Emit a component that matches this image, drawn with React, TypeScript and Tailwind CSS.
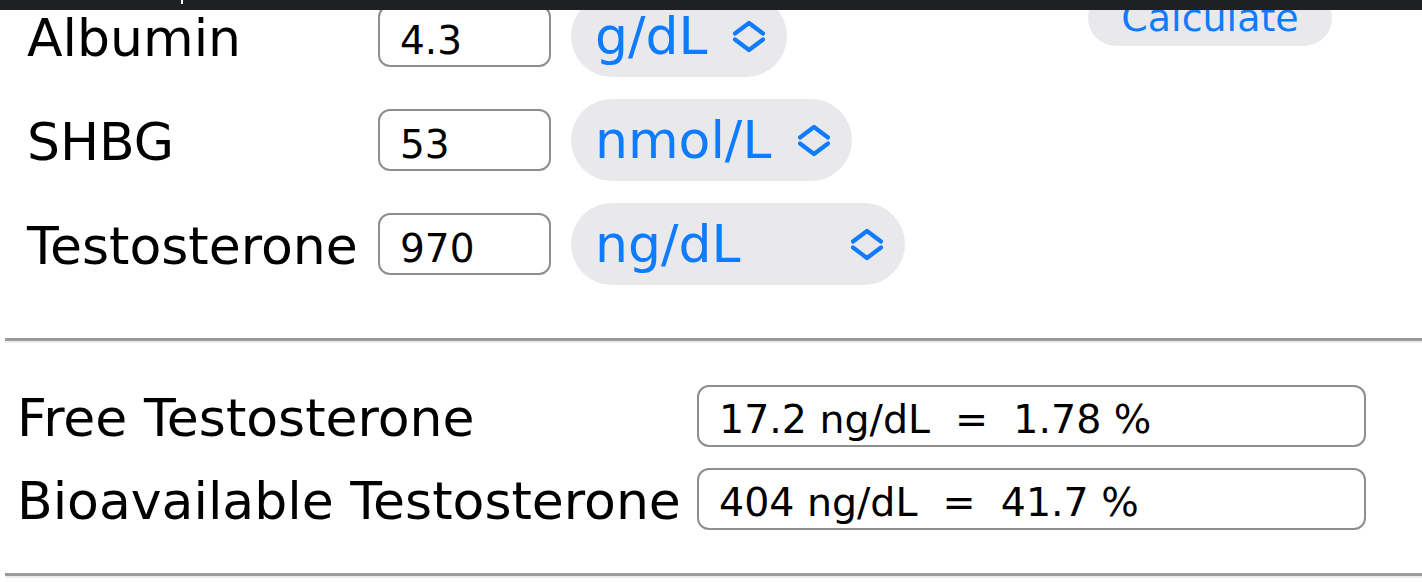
import React from "react";

const Chevron = () => (
  <svg width="34" height="33" viewBox="0 0 34 33" fill="none" className="shrink-0">
    <polyline points="3,13.5 17,3 31,13.5" stroke="#0f7bff" strokeWidth="4.2" strokeLinecap="round" strokeLinejoin="round" />
    <polyline points="3,19.5 17,30 31,19.5" stroke="#0f7bff" strokeWidth="4.2" strokeLinecap="round" strokeLinejoin="round" />
  </svg>
);

const rows = [
  { label: "Albumin", value: "4.3", unit: "g/dL", w: "w-[216px]" },
  { label: "SHBG", value: "53", unit: "nmol/L", w: "w-[281px]" },
  { label: "Testosterone", value: "970", unit: "ng/dL", w: "w-[334px]" },
];

const results = [
  { label: "Free Testosterone", value: "17.2 ng/dL\u00a0 = \u00a01.78 %" },
  { label: "Bioavailable Testosterone", value: "404 ng/dL\u00a0 = \u00a041.7 %" },
];

export default function App() {
  return (
    <div
      className="relative w-[1422px] h-[582px] overflow-hidden bg-white text-black"
      style={{ fontFamily: '"DejaVu Sans", Verdana, sans-serif' }}
    >
      <div className="absolute top-0 left-0 z-10 h-[10px] w-full bg-[#1f2023]">
        <div className="absolute left-[181px] top-0 h-[4px] w-[2px] bg-white" />
      </div>

      <div className="flex flex-col">
        <div className="mt-[-5px] flex">
          <div className="flex w-[1088px] shrink-0 flex-col gap-[22px]">
            {rows.map((r) => (
              <div key={r.label} className="flex h-[82px] items-center">
                <div className="w-[378px] shrink-0 whitespace-nowrap pl-[27px] pt-[4px] text-[52px] leading-none">{r.label}</div>
                <div className="flex h-[62px] w-[173px] shrink-0 items-center rounded-[12px] border-2 border-[#8e8e8e] pl-[20px] pt-[8px] text-[39px] leading-none">
                  {r.value}
                </div>
                <div
                  className={`ml-[20px] flex h-[82px] ${r.w} shrink-0 items-center justify-between rounded-full bg-[#e9e9eb] pl-[24px] pr-[21px] text-[52px] leading-none text-[#0f7bff]`}
                >
                  <span>{r.unit}</span>
                  <Chevron />
                </div>
              </div>
            ))}
          </div>
          <div className="mt-[-5px] flex h-[56px] w-[244px] shrink-0 items-center justify-center rounded-full bg-[#e9e9eb] text-[38px] leading-none text-[#0f7bff]">
            Calculate
          </div>
        </div>

        <div className="ml-[5px] mt-[53px] h-[5px] border-t-[3px] border-b-[2px] border-t-[#9b9b9b] border-b-[#ececec]" />

        <div className="mt-[42px] flex flex-col gap-[21px]">
          {results.map((r) => (
            <div key={r.label} className="flex h-[62px] items-center">
              <div className="w-[697px] shrink-0 whitespace-nowrap pl-[17px] pt-[4px] text-[52px] leading-none">{r.label}</div>
              <div className="flex h-[62px] w-[669px] shrink-0 items-center whitespace-pre rounded-[12px] border-2 border-[#8e8e8e] pl-[20px] pt-[8px] text-[39.5px] leading-none">
                {r.value}
              </div>
            </div>
          ))}
        </div>

        <div className="ml-[5px] mt-[43px] h-[5px] border-t-[3px] border-b-[2px] border-t-[#9b9b9b] border-b-[#ececec]" />
      </div>
    </div>
  );
}
